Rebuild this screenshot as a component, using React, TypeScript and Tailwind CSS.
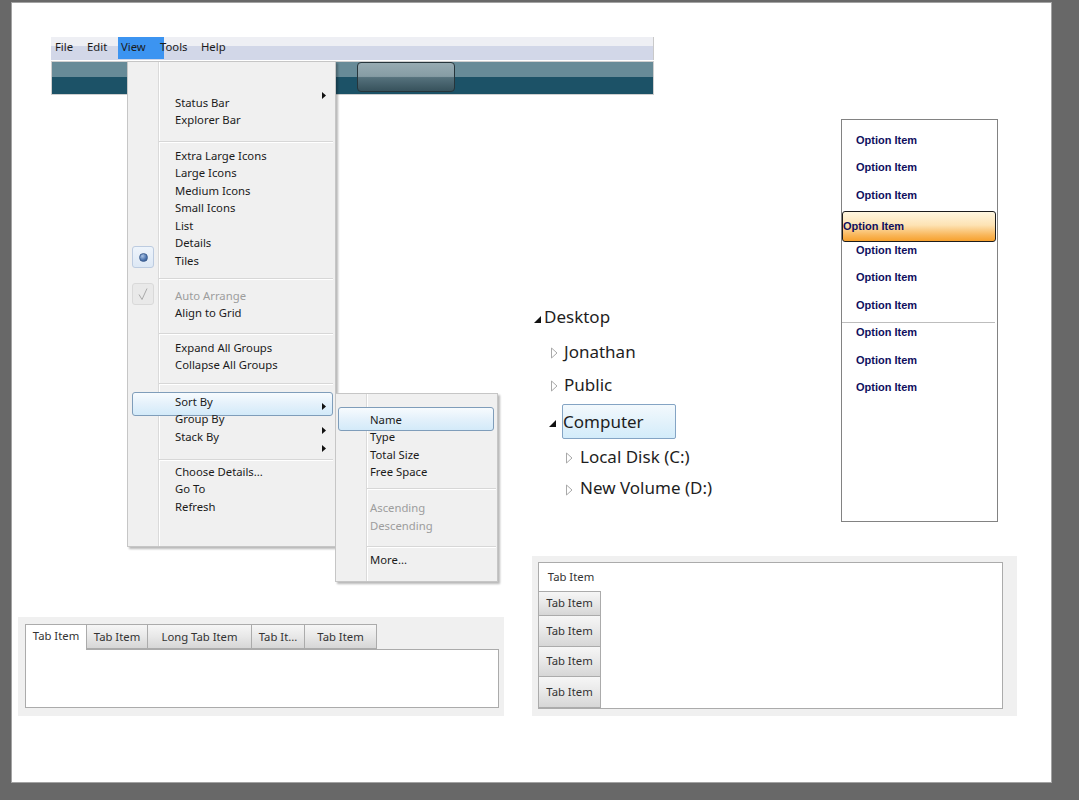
import React from "react";

const Arrow = ({ cls }: { cls: string }) => (
  <svg className={cls} width="4" height="7" viewBox="0 0 4 7">
    <path d="M0 0L4 3.5L0 7Z" fill="#111" />
  </svg>
);

function MRow({ children, disabled, sub }: { children?: React.ReactNode; disabled?: boolean; sub?: boolean }) {
  return (
    <div
      className={`h-[17.5px] leading-[17.5px] pt-[0.5px] text-[11.3px] whitespace-nowrap ${sub ? "pl-[34px]" : "pl-[47px]"} ${
        disabled ? "text-[#9d9d9d]" : "text-[#1b1b1b]"
      }`}
    >
      {children}
    </div>
  );
}

const SepLine = () => <div className="ml-[31px] mr-[2px] h-[2px] border-t border-t-[#d7d7d7] border-b border-b-white" />;

const ExpTri = ({ cls }: { cls: string }) => (
  <svg className={cls} width="7" height="7" viewBox="0 0 7 7">
    <path d="M7 0L7 7L0 7Z" fill="#111" />
  </svg>
);
const ColTri = ({ cls }: { cls: string }) => (
  <svg className={cls} width="8" height="12" viewBox="0 0 8 12">
    <path d="M1.5 1L7 6L1.5 11Z" fill="#fff" stroke="#a9a9a9" strokeWidth="1" />
  </svg>
);

const tabGrad = "bg-[linear-gradient(to_bottom,#f6f6f6_0%,#e8e8e8_50%,#d6d6d6_100%)]";

export default function App() {
  return (
    <div className="w-[1079px] h-[800px] bg-[#686868] pt-[3px] pl-[12px] overflow-hidden font-['Noto_Sans',sans-serif]">
      <div className="relative w-[1039px] h-[779px] bg-white shadow-[0_0_0_1px_#a3a3a3]">
        {/* Menu bar + toolbar */}
        <div className="absolute left-[39px] top-[34px] w-[603px]">
          <div className="relative h-[23px] bg-[linear-gradient(to_bottom,#eeeff4_0%,#eeeff4_40%,#d2d7e8_40%,#d2d7e8_100%)] border-r border-r-[#c9c9c9] flex items-center pl-[4px] pb-[2px] text-[11.3px] text-[#1b1b1b]">
            <div className="absolute left-[67px] top-0 w-[46px] h-[22px] bg-[#3c94f1]" />
            <span className="relative w-[32px]">File</span>
            <span className="relative w-[34px]">Edit</span>
            <span className="relative w-[39px]">View</span>
            <span className="relative w-[41px]">Tools</span>
            <span className="relative">Help</span>
          </div>
          <div className="mt-[1px] h-[34px] border border-[#cfcfcf] bg-[linear-gradient(to_bottom,#678b98_0%,#678b98_47%,#1c5267_47%,#1c5267_100%)] flex items-start pl-[305px]">
            <div className="w-[98px] h-[30px] rounded-[4px] border border-[#26353b] bg-[linear-gradient(to_bottom,#97abb2_0%,#869ca4_48%,#55717c_52%,#37525c_100%)]" />
          </div>
        </div>

        {/* Dropdown menu */}
        <div className="absolute left-[115px] top-[58px] w-[209px] h-[486px] bg-[#f0f0f0] border border-[#c6c6c6] shadow-[2px_2px_2px_rgba(0,0,0,0.28)]">
          <div className="absolute left-[30px] top-0 bottom-0 w-[2px] border-l border-l-[#dadada] border-r border-r-white" />
          <div className="absolute left-[4px] top-[330px] w-[201px] h-[24px] rounded-[3px] border border-[#7f9dba] bg-[linear-gradient(to_bottom,#f7fbfe_0%,#e4f1fb_50%,#d3eaf9_100%)]" />
          <div className="absolute left-[4px] top-[184px] w-[22px] h-[22px] rounded-[3px] border border-[#bccbe0] bg-[linear-gradient(to_bottom,#eef4fb,#dde8f5)] flex items-center justify-center">
            <div className="w-[9px] h-[9px] rounded-full border border-[#3d5f91] bg-[radial-gradient(circle_at_35%_30%,#a9c3e6_0%,#4a72ad_60%,#2b4c80_100%)]" />
          </div>
          <div className="absolute left-[4px] top-[221px] w-[22px] h-[22px] rounded-[3px] border border-[#d9d9d9] bg-[#e9e9e9] flex items-center justify-center">
            <svg width="14" height="14" viewBox="0 0 14 14">
              <path d="M3 7.5L6 12.5L11 1.5" fill="none" stroke="#a9a9a9" strokeWidth="1" />
            </svg>
          </div>
          <Arrow cls="absolute left-[194px] top-[30px]" />
          <Arrow cls="absolute left-[194px] top-[341px]" />
          <Arrow cls="absolute left-[194px] top-[365px]" />
          <Arrow cls="absolute left-[194px] top-[383px]" />

          <div className="relative flex flex-col">
            <div className="h-[31.25px]" />
            <MRow>Status Bar</MRow>
            <MRow>Explorer Bar</MRow>
            <div className="h-[18px] pt-[12.5px]"><SepLine /></div>
            <MRow>Extra Large Icons</MRow>
            <MRow>Large Icons</MRow>
            <MRow>Medium Icons</MRow>
            <MRow>Small Icons</MRow>
            <MRow>List</MRow>
            <MRow>Details</MRow>
            <MRow>Tiles</MRow>
            <div className="h-[17.5px] pt-[9px]"><SepLine /></div>
            <MRow disabled>Auto Arrange</MRow>
            <MRow>Align to Grid</MRow>
            <div className="h-[17px] pt-[12px]"><SepLine /></div>
            <MRow>Expand All Groups</MRow>
            <MRow>Collapse All Groups</MRow>
            <div className="h-[19px] pt-[10px]"><SepLine /></div>
            <MRow>Sort By</MRow>
            <MRow>Group By</MRow>
            <MRow>Stack By</MRow>
            <div className="h-[17.5px] pt-[14.5px]"><SepLine /></div>
            <MRow>Choose Details...</MRow>
            <MRow>Go To</MRow>
            <MRow>Refresh</MRow>
          </div>
        </div>

        {/* Submenu */}
        <div className="absolute left-[323px] top-[390px] w-[163px] h-[189px] bg-[#f0f0f0] border border-[#c6c6c6] shadow-[2px_2px_2px_rgba(0,0,0,0.28)]">
          <div className="absolute left-[30px] top-0 bottom-0 w-[2px] border-l border-l-[#dadada] border-r border-r-white" />
          <div className="absolute left-[2px] top-[13px] w-[156px] h-[24px] rounded-[3px] border border-[#7f9dba] bg-[linear-gradient(to_bottom,#f7fbfe_0%,#e4f1fb_50%,#d3eaf9_100%)]" />
          <div className="relative flex flex-col">
            <div className="h-[16.25px]" />
            <MRow sub>Name</MRow>
            <MRow sub>Type</MRow>
            <MRow sub>Total Size</MRow>
            <MRow sub>Free Space</MRow>
            <div className="h-[18.25px] pt-[7.5px]"><div className="ml-[31px] mr-[1px] h-[2px] border-t border-t-[#d7d7d7] border-b border-b-white" /></div>
            <MRow sub disabled>Ascending</MRow>
            <MRow sub disabled>Descending</MRow>
            <div className="h-[16.75px] pt-[12.5px]"><div className="ml-[31px] mr-[1px] h-[2px] border-t border-t-[#d7d7d7] border-b border-b-white" /></div>
            <MRow sub>More...</MRow>
          </div>
        </div>

        {/* Horizontal tab control */}
        <div className="absolute left-[6px] top-[614px] w-[486px] h-[99px] bg-[#f0f0f0] pt-[7px] pl-[7px] text-[11.3px] text-[#333]">
          <div className="flex items-end h-[25px]">
            <div className="relative z-10 w-[62px] h-[26px] -mb-px bg-white border border-[#ababab] border-b-0 flex items-center justify-center pb-[2px]">Tab Item</div>
            <div className={`w-[61px] h-[25px] border border-l-0 border-[#ababab] ${tabGrad} flex items-center justify-center pt-[2px]`}>Tab Item</div>
            <div className={`w-[104px] h-[25px] border border-l-0 border-[#ababab] ${tabGrad} flex items-center justify-center pt-[2px]`}>Long Tab Item</div>
            <div className={`w-[53px] h-[25px] border border-l-0 border-[#ababab] ${tabGrad} flex items-center justify-center pt-[2px]`}>Tab It...</div>
            <div className={`w-[72px] h-[25px] border border-l-0 border-[#ababab] ${tabGrad} flex items-center justify-center pt-[2px]`}>Tab Item</div>
          </div>
          <div className="w-[474px] h-[59px] bg-white border border-[#ababab]" />
        </div>

        {/* Tree view */}
        <div className="absolute left-[521px] top-[297px] flex flex-col text-[17px] text-[#1e1e1e]">
          <div className="h-[34px] flex items-center">
            <ExpTri cls="ml-[1px] mt-[5px]" />
            <span className="ml-[3px]">Desktop</span>
          </div>
          <div className="h-[35px] flex items-center">
            <ColTri cls="ml-[17px] mt-[2px]" />
            <span className="ml-[6px]">Jonathan</span>
          </div>
          <div className="h-[31px] flex items-center">
            <ColTri cls="ml-[17px] mt-[2px]" />
            <span className="ml-[6px]">Public</span>
          </div>
          <div className="h-[42px] flex items-center">
            <ExpTri cls="ml-[16px] mt-[4px]" />
            <div className="ml-[6px] w-[114px] h-[35px] rounded-[2px] border border-[#84a4c4] bg-[linear-gradient(to_bottom,#f3f9fd_0%,#e3f2fb_50%,#d3ecfa_100%)] flex items-center pl-[0px] pt-[2px]">
              Computer
            </div>
          </div>
          <div className="h-[30px] flex items-center">
            <ColTri cls="ml-[32px] mt-[2px]" />
            <span className="ml-[7px]">Local Disk (C:)</span>
          </div>
          <div className="h-[32px] flex items-center">
            <ColTri cls="ml-[32px] mt-[3px]" />
            <span className="ml-[7px]">New Volume (D:)</span>
          </div>
        </div>

        {/* List box */}
        <div className="absolute left-[829px] top-[116px] w-[157px] h-[403px] border border-[#828282] bg-white font-['Liberation_Sans',Arial,sans-serif] font-bold text-[11px] text-[#0f0f5e]">
          <div className="flex flex-col pt-[6.25px]">
            <div className="h-[27.5px] flex items-center pl-[14px]">Option Item</div>
            <div className="h-[27.5px] flex items-center pl-[14px]">Option Item</div>
            <div className="h-[27.5px] flex items-center pl-[14px]">Option Item</div>
            <div className="relative h-[27.5px]">
              <div className="absolute left-0 top-[2px] w-[154px] h-[31px] rounded-[3px] border border-[#1c1c1c] bg-[linear-gradient(to_bottom,#fff6e0_0%,#fde3b4_45%,#f9b659_80%,#f7a12e_100%)] flex items-center pl-[0px]">
                Option Item
              </div>
            </div>
            <div className="h-[27.5px] flex items-center pl-[14px]">Option Item</div>
            <div className="h-[27.5px] flex items-center pl-[14px]">Option Item</div>
            <div className="h-[27.5px] flex items-center pl-[14px]">Option Item</div>
            <div className="relative h-[27.5px] flex items-center pl-[14px]">
              <div className="absolute left-0 right-[2px] top-[3px] h-px bg-[#bdbdbd]" />
              Option Item
            </div>
            <div className="h-[27.5px] flex items-center pl-[14px]">Option Item</div>
            <div className="h-[27.5px] flex items-center pl-[14px]">Option Item</div>
          </div>
        </div>

        {/* Vertical tab control */}
        <div className="absolute left-[520px] top-[553px] w-[485px] h-[160px] bg-[#f0f0f0] pt-[6px] pl-[6px] text-[11.3px] text-[#333]">
          <div className="w-[465px] h-[147px] bg-white border border-[#ababab] flex flex-col">
            <div className="h-[29px] w-[62px] flex items-center justify-center pl-[2px]">Tab Item</div>
            <div className="-ml-px flex flex-col">
              <div className={`w-[63px] h-[25px] border border-[#ababab] ${tabGrad} flex items-center justify-center`}>Tab Item</div>
              <div className={`w-[63px] h-[31px] border border-t-0 border-[#ababab] ${tabGrad} flex items-center justify-center`}>Tab Item</div>
              <div className={`w-[63px] h-[30px] border border-t-0 border-[#ababab] ${tabGrad} flex items-center justify-center`}>Tab Item</div>
              <div className={`w-[63px] h-[31px] border border-t-0 border-[#ababab] ${tabGrad} flex items-center justify-center`}>Tab Item</div>
            </div>
          </div>
        </div>
      </div>
    </div>
  );
}
